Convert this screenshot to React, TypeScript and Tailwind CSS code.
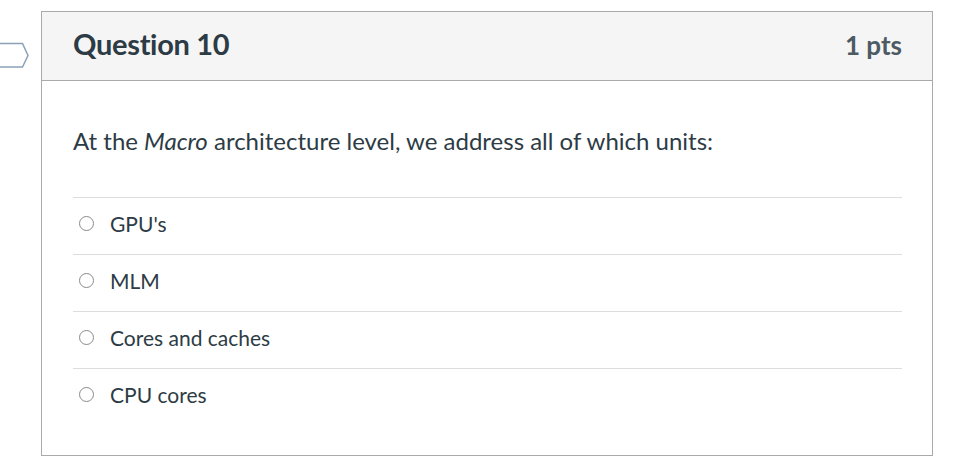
import { useState } from "react";

const answers = ["GPU's", "MLM", "Cores and caches", "CPU cores"];

const App = () => {
  const [picked, setPicked] = useState<number | null>(null);

  return (
    <div className="relative min-h-screen bg-white font-['Lato','Noto_Sans',sans-serif] text-[#2d3b45]">
      {/* bookmark flag */}
      <svg
        className="absolute left-0 top-[31px]"
        width="32"
        height="27"
        viewBox="0 0 32 27"
        fill="none"
      >
        <path d="M-6 1.5 H22.5 L28 13.5 L22.5 25 H-6" stroke="#8aa1b6" strokeWidth="1.5" />
      </svg>

      <div className="ml-[41px] mt-[11px] flex h-[445px] w-[892px] flex-col border border-[#aaaaaa]">
        <div className="flex h-[69px] shrink-0 items-center justify-between border-b border-[#aaaaaa] bg-[#f5f5f5] pb-[5px] pl-[31px] pr-[30px]">
          <h2 className="text-[29px] font-bold leading-none tracking-[-0.3px]">Question 10</h2>
          <span className="pt-[2px] text-[26px] font-bold leading-none text-[#4d5a63]">1 pts</span>
        </div>

        <div className="pl-[31px] pr-[30px]">
          <p className="mt-[46px] text-[24px] leading-[28px]">
            At the <em>Macro</em> architecture level, we address all of which units:
          </p>

          <div className="mt-[42px]">
            {answers.map((a, i) => (
              <label
                key={a}
                className="flex h-[57px] cursor-pointer items-center border-t border-[#dddddd] pb-[5px]"
                onClick={() => setPicked(i)}
              >
                <span className="ml-[6px] flex h-[15px] w-[15px] shrink-0 items-center justify-center rounded-full border-[1.5px] border-[#8a8a8a] bg-white">
                  {picked === i && <span className="h-[7px] w-[7px] rounded-full bg-[#2d3b45]" />}
                </span>
                <span className="ml-[16px] text-[21px] leading-none">{a}</span>
              </label>
            ))}
          </div>
        </div>
      </div>
    </div>
  );
};

export default App;
